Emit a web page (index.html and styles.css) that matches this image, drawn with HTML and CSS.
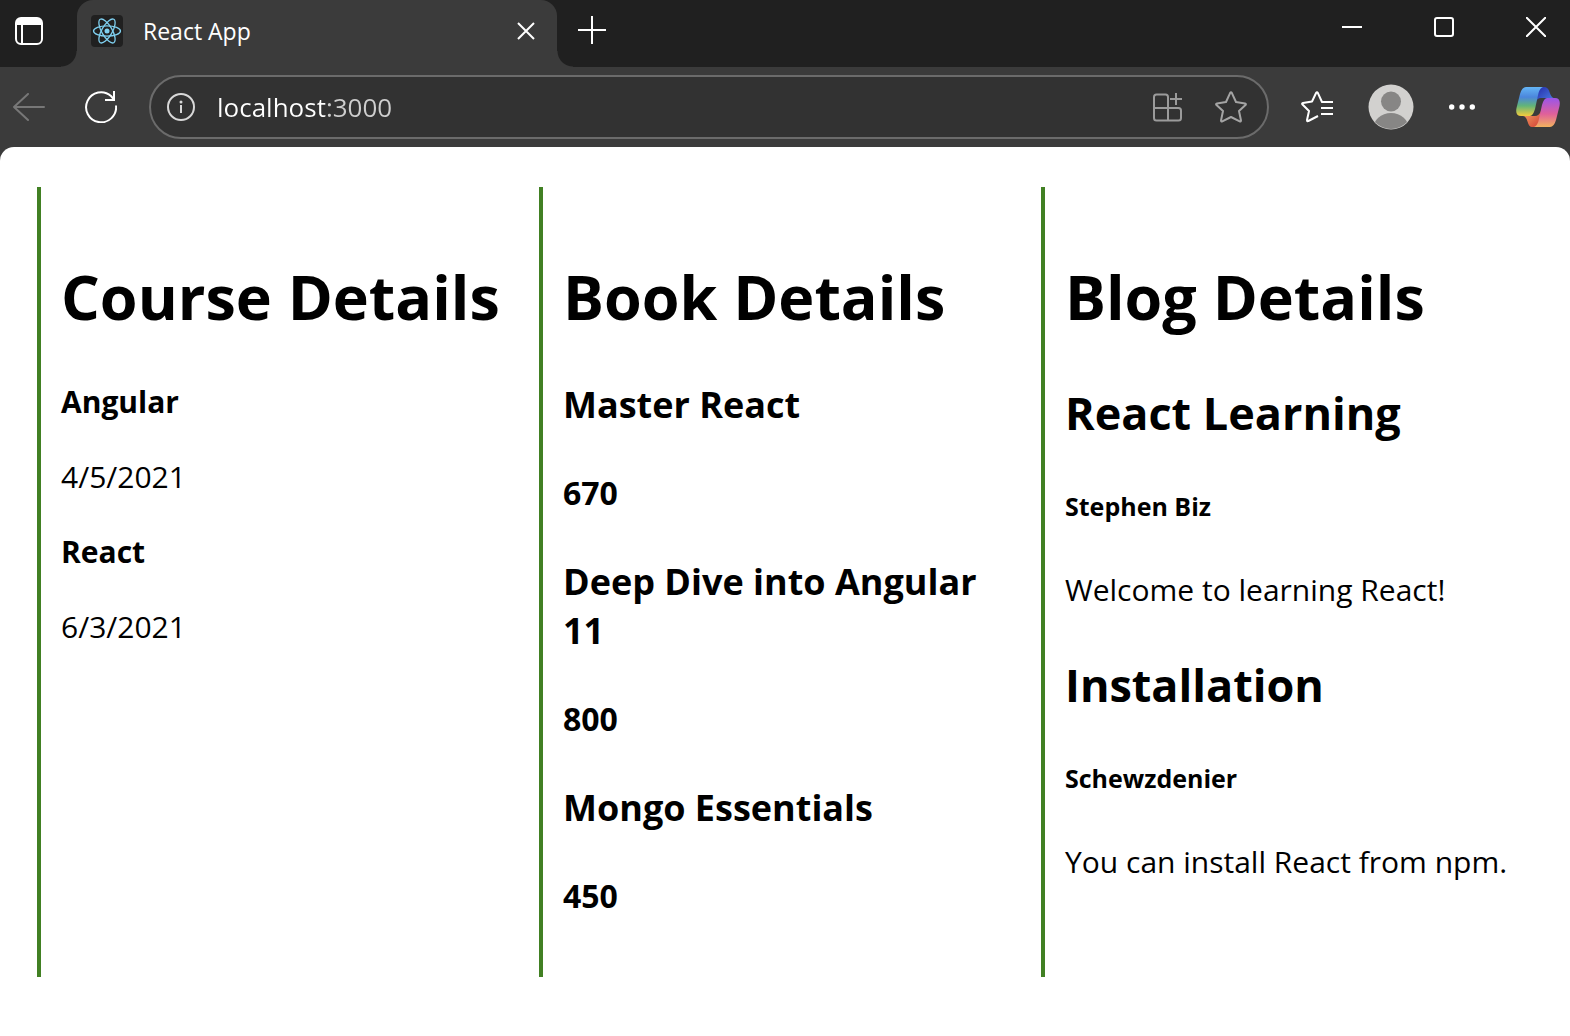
FILE: index.html
```html
<!DOCTYPE html>
<html lang="en">
<head>
<meta charset="utf-8">
<title>React App</title>
<link rel="stylesheet" href="styles.css">
</head>
<body>
<header class="browser">
  <div class="tabstrip">
    <button class="icon-btn tab-actions" aria-label="Tab actions">
      <svg width="28" height="28" viewBox="0 0 28 28" fill="none" stroke="#fff" stroke-width="2"><rect x="1" y="1" width="26" height="26" rx="5"/><path d="M1 8V6q0-5 5-5h16q5 0 5 5v2z" fill="#fff" stroke="none"/><path d="M7 8v19"/></svg>
    </button>
    <div class="tab">
      <svg class="favicon" width="32" height="32" viewBox="0 0 32 32" fill="none" stroke="#7fd0f0" stroke-width="1.3"><rect width="32" height="32" rx="4" fill="#202020" stroke="none"/><ellipse cx="16" cy="16" rx="13.5" ry="5.2"/><ellipse cx="16" cy="16" rx="13.5" ry="5.2" transform="rotate(60 16 16)"/><ellipse cx="16" cy="16" rx="13.5" ry="5.2" transform="rotate(120 16 16)"/><circle cx="16" cy="16" r="2.5" fill="#7fd0f0" stroke="none"/></svg>
      <span class="tab-title">React App</span>
      <button class="icon-btn" aria-label="Close tab">
        <svg width="18" height="18" viewBox="0 0 18 18" stroke="#fff" stroke-width="2"><path d="M1 1l16 16M17 1L1 17"/></svg>
      </button>
    </div>
    <button class="icon-btn new-tab" aria-label="New tab">
      <svg width="28" height="28" viewBox="0 0 28 28" stroke="#fff" stroke-width="2"><path d="M14 0v28M0 14h28"/></svg>
    </button>
    <div class="window-controls">
      <button class="icon-btn" aria-label="Minimize"><svg width="20" height="20" viewBox="0 0 20 20" stroke="#fff" stroke-width="2"><path d="M0 10h20"/></svg></button>
      <button class="icon-btn" aria-label="Maximize"><svg width="20" height="20" viewBox="0 0 20 20" fill="none" stroke="#fff" stroke-width="2"><rect x="1" y="1" width="18" height="18" rx="2"/></svg></button>
      <button class="icon-btn" aria-label="Close"><svg width="20" height="20" viewBox="0 0 20 20" stroke="#fff" stroke-width="2"><path d="M0 0l20 20M20 0L0 20"/></svg></button>
    </div>
  </div>
  <div class="toolbar">
    <button class="icon-btn back" aria-label="Back">
      <svg width="32" height="28" viewBox="0 0 32 28" fill="none" stroke="#777" stroke-width="2" stroke-linecap="round" stroke-linejoin="round"><path d="M15 1L1 14l14 13M1 14h30"/></svg>
    </button>
    <button class="icon-btn reload" aria-label="Refresh">
      <svg width="32" height="32" viewBox="0 0 32 32" fill="none" stroke="#fff" stroke-width="2"><path d="M31 14.500A15 15 0 1 1 26 5L29 8.500M29 0v9H20"/></svg>
    </button>
    <div class="address">
      <svg width="28" height="28" viewBox="0 0 28 28" fill="none" stroke="#d8d8d8" stroke-width="2"><circle cx="14" cy="14" r="13"/><path d="M14 12v8"/><circle cx="14" cy="9" r="1.500" fill="#d8d8d8" stroke="none"/></svg>
      <input class="url" type="text" value="localhost:3000" aria-label="Address">
      <button class="icon-btn" aria-label="App available">
        <svg width="30" height="30" viewBox="0 0 30 30" fill="none" stroke="#9b9b9b" stroke-width="2"><path d="M15 16V5q0-2.500-2.500-2.500h-9Q1 2.500 1 5v21q0 2.500 2.500 2.500h22Q28 28.500 28 26v-7.500q0-2.500-2.500-2.500H1M15 16v12M23 1v12M17 7h12"/></svg>
      </button>
      <button class="icon-btn" aria-label="Add to favorites">
        <svg width="32" height="32" viewBox="0 0 32 32" fill="none" stroke="#a4a4a4" stroke-width="2" stroke-linejoin="round"><path d="M15.200 1.800Q16 .500 16.800 1.800L21 11L30 12.400Q31.500 12.800 30.500 14L24 20L26 29.500Q26 31 24.700 30.300L16 26L7.300 30.300Q6 31 6 29.500L8 20L1.500 14Q.500 12.800 2 12.400L11 11Z"/></svg>
      </button>
    </div>
    <div class="tools">
      <button class="icon-btn" aria-label="Favorites">
        <svg width="32" height="32" viewBox="0 0 32 32" fill="none" stroke="#fff" stroke-width="2" stroke-linejoin="round"><path d="M32 11H21L16.800 1.800Q16 .500 15.200 1.800L11 10.500L2 12Q.500 12.500 1.500 13.500L8 20L6 29Q6 30.800 7.300 30L17 25M20 17h12M20 23h12"/></svg>
      </button>
      <button class="icon-btn" aria-label="Profile">
        <svg width="46" height="46" viewBox="0 0 46 46"><defs><clipPath id="face"><circle cx="23" cy="23" r="22"/></clipPath></defs><circle cx="23" cy="23" r="22.500" fill="#d2d1cf"/><g clip-path="url(#face)" fill="#878685"><circle cx="23" cy="17.500" r="10"/><ellipse cx="23" cy="45" rx="18" ry="16"/></g></svg>
      </button>
      <button class="icon-btn" aria-label="Settings and more">
        <svg width="26" height="6" viewBox="0 0 26 6" fill="#fff"><circle cx="2.700" cy="3" r="2.700"/><circle cx="13" cy="3" r="2.700"/><circle cx="23.300" cy="3" r="2.700"/></svg>
      </button>
      <button class="icon-btn copilot" aria-label="Copilot">
        <svg width="44" height="40" viewBox="0 0 44 40"><defs><linearGradient id="ca" x1="0" y1="0" x2="0" y2="1"><stop offset="0" stop-color="#64b5f5"/><stop offset=".350" stop-color="#4b86dc"/><stop offset=".650" stop-color="#62b578"/><stop offset="1" stop-color="#f4cc3c"/></linearGradient><linearGradient id="cb" x1="0" y1="0" x2="0" y2="1"><stop offset="0" stop-color="#9a55ea"/><stop offset=".550" stop-color="#e0609a"/><stop offset="1" stop-color="#f2b25e"/></linearGradient><linearGradient id="cc" x1="0" y1="0" x2="1" y2="1"><stop offset="0" stop-color="#2327a8"/><stop offset="1" stop-color="#4d84e6"/></linearGradient><linearGradient id="cd" x1="0" y1="0" x2="1" y2="1"><stop offset="0" stop-color="#f3a564"/><stop offset="1" stop-color="#d23e35"/></linearGradient></defs><path d="M21 0h7q4 0 5.500 5t4 6H25q-4 0-6 5z" fill="url(#cc)"/><path d="M23 40h-7q-3 0-4.500-5.500T7 29h12q4 0 6-5z" fill="url(#cd)"/><path d="M10 0h17q-3 1-4.500 6L19 22q-2 7-5 7H5q-6 0-4.500-8L4 7q2-7 6-7z" fill="url(#ca)"/><path d="M34 40H18q3-1 4.500-6L26 18q2-7 5-7h8q6 0 4.500 8L40 33q-2 7-6 7z" fill="url(#cb)"/></svg>
      </button>
    </div>
  </div>
</header>
<main class="page">
  <section class="column">
    <h1>Course Details</h1>
    <p><b>Angular</b></p>
    <p>4/5/2021</p>
    <p><b>React</b></p>
    <p>6/3/2021</p>
  </section>
  <section class="column">
    <h1>Book Details</h1>
    <h3>Master React</h3>
    <h4>670</h4>
    <h3>Deep Dive into Angular 11</h3>
    <h4>800</h4>
    <h3>Mongo Essentials</h3>
    <h4>450</h4>
  </section>
  <section class="column">
    <h1>Blog Details</h1>
    <h2>React Learning</h2>
    <h5>Stephen Biz</h5>
    <p>Welcome to learning React!</p>
    <h2>Installation</h2>
    <h5>Schewzdenier</h5>
    <p>You can install React from npm.</p>
  </section>
</main>
</body>
</html>
```
FILE: styles.css
```css
* { box-sizing: border-box; }
body {
  margin: 0;
  min-height: 100vh;
  background: #3b3b3b;
  color: #000;
  font-family: "Open Sans", "Noto Sans", sans-serif;
  font-size: 30px;
  line-height: 43px;
  display: flex;
  flex-direction: column;
}
svg { display: block; flex: none; }
.icon-btn {
  display: flex;
  align-items: center;
  justify-content: center;
  flex: none;
  padding: 0;
  border: 0;
  background: none;
}
.tabstrip {
  display: flex;
  height: 67px;
  background: #202020;
}
.tab-actions { width: 77px; padding-right: 19px; padding-bottom: 5px; }
.tab {
  position: relative;
  display: flex;
  align-items: center;
  width: 480px;
  padding: 0 22px 5px 14px;
  background: #3b3b3b;
  border-radius: 16px 16px 0 0;
}
/* curved feet where the tab meets the toolbar */
.tab::before, .tab::after {
  content: "";
  position: absolute;
  bottom: 0;
  width: 16px;
  height: 16px;
}
.tab::before { left: -16px; background: radial-gradient(circle at 0 0, #202020 15px, #3b3b3b 16px); }
.tab::after { right: -16px; background: radial-gradient(circle at 100% 0, #202020 15px, #3b3b3b 16px); }
.tab-title {
  flex: 1;
  margin-left: 20px;
  color: #fff;
  font-size: 23px;
}
.new-tab { width: 70px; padding-bottom: 7px; }
.window-controls {
  display: flex;
  gap: 72px;
  margin-left: auto;
  padding: 0 24px 13px 0;
}
.toolbar {
  display: flex;
  align-items: center;
  height: 80px;
  padding: 0 10px 0 13px;
}
.reload { margin: 0 32px 0 40px; }
.address {
  flex: 1;
  display: flex;
  align-items: center;
  gap: 32px;
  height: 64px;
  padding: 0 20px 0 16px;
  border: 2px solid #6b6b6b;
  border-radius: 32px;
  background: #323232;
}
/* host in white, port dimmed */
.url {
  flex: 1;
  min-width: 0;
  margin-left: -10px;
  padding: 0;
  border: 0;
  outline: 0;
  background: linear-gradient(90deg, #fff 111px, #cecece 111px);
  -webkit-background-clip: text;
  background-clip: text;
  color: transparent;
  font: inherit;
  font-size: 26px;
}
.tools {
  display: flex;
  align-items: center;
  gap: 35px;
  padding-left: 32px;
}
.copilot { margin-left: 6px; }
.page {
  flex: 1;
  display: grid;
  grid-template-columns: repeat(3, 1fr);
  align-items: stretch;
  padding: 40px 27px 59px 37px;
  background: #fff;
  border-radius: 14px 14px 0 0;
}
.column {
  padding: 24px 20px 16px;
  border-left: 4px solid #418023;
}
h1 { margin: 43px 0 41px; font-size: 61px; line-height: 85px; }
h2 { margin: 42px 0; font-size: 45px; line-height: 64px; }
h3 { margin: 37px 0; font-size: 36px; line-height: 49px; }
h4 { margin: 43px 0; font-size: 32px; line-height: 42px; }
h5 { margin: 44px 0; font-size: 25px; line-height: 35px; }
p { margin: 32px 0; }
```
